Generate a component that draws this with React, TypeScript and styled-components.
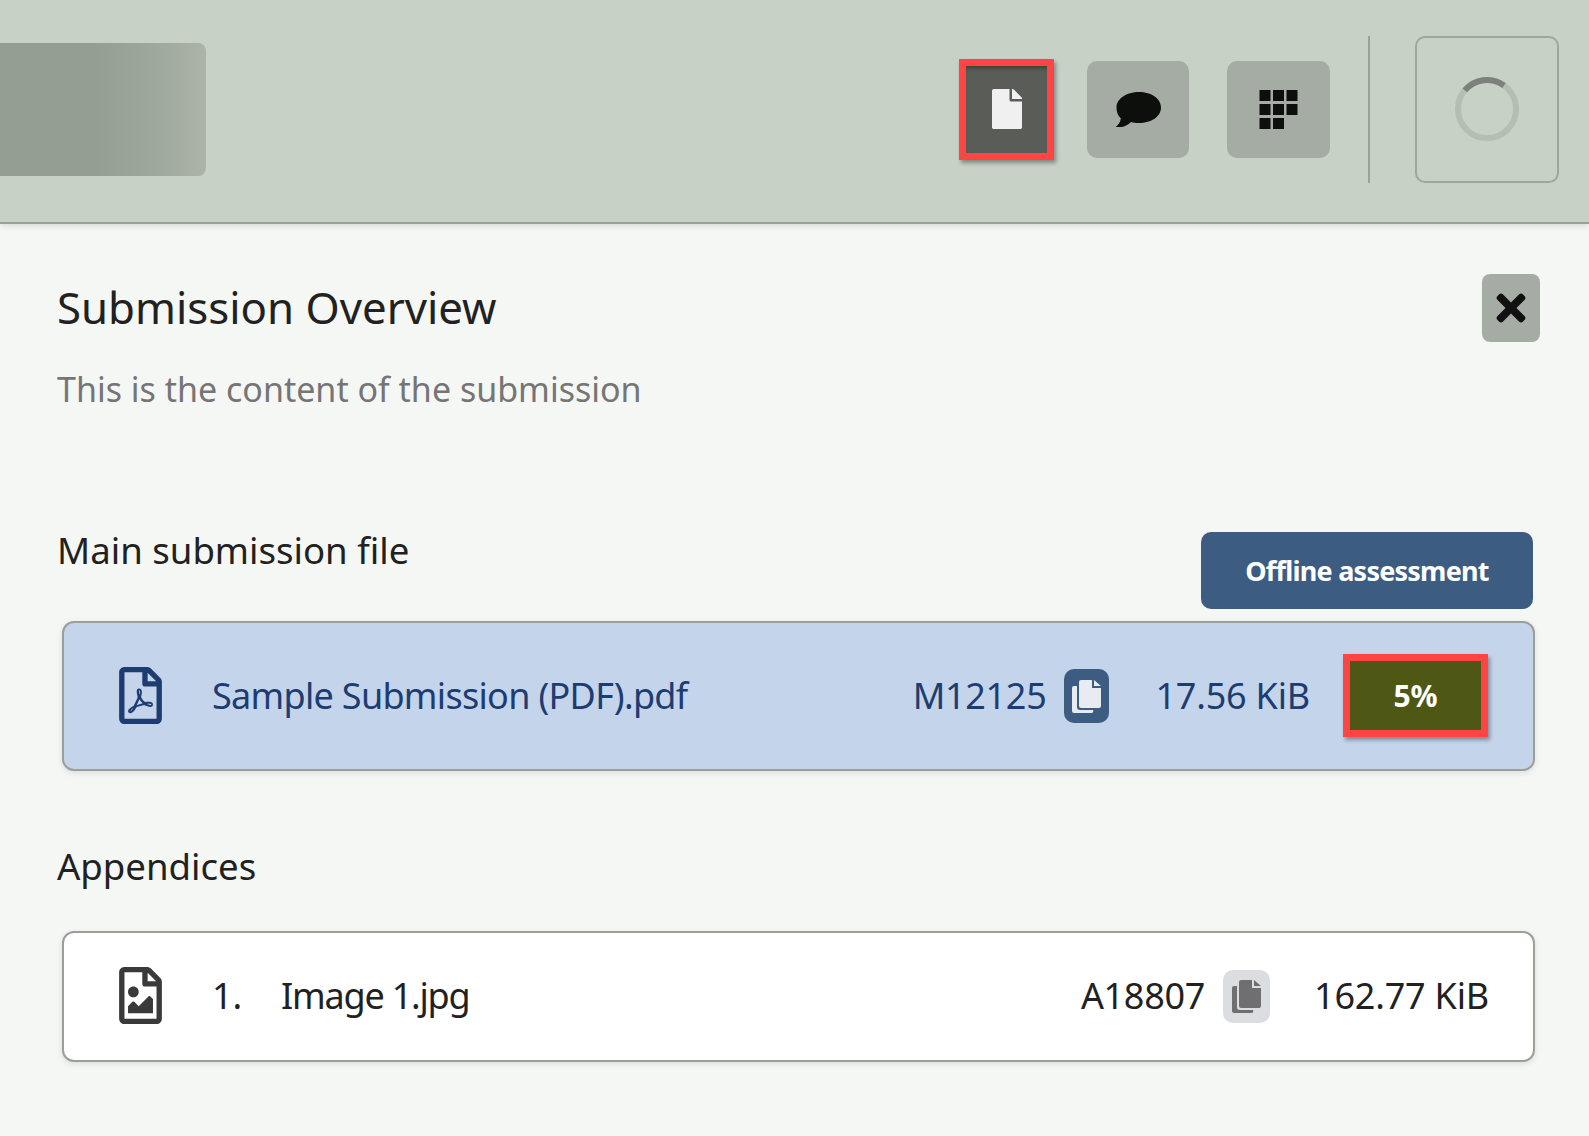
import React from "react";
import styled, { createGlobalStyle } from "styled-components";
import { FaRegFilePdf, FaRegFileImage, FaTimes, FaFile } from "react-icons/fa";

const Global = createGlobalStyle`
  html, body { margin: 0; padding: 0; background: #f5f7f4; }
  body { font-family: "Noto Sans", "Open Sans", sans-serif; color: #212121; }
  * { box-sizing: border-box; }
`;

const Page = styled.div`
  width: 1589px;
  height: 1136px;
  overflow: hidden;
  background: #f5f7f4;
`;

const Header = styled.header`
  height: 224px;
  background: #c7d1c5;
  border-bottom: 2px solid #98a295;
  box-shadow: 0 2px 6px rgba(0, 0, 0, 0.12);
  display: flex;
  align-items: center;
  padding: 0 30px 4px 0;
`;

const BlurredBox = styled.div`
  width: 206px;
  height: 133px;
  margin-right: auto;
  border-radius: 0 8px 8px 0;
  background: linear-gradient(90deg, #949e92 0%, #949e92 45%, #9aa498 65%, #acb3a9 100%);
`;

const IconButton = styled.div<{ $active?: boolean; $wide?: boolean }>`
  width: ${(p) => (p.$active ? "95px" : p.$wide ? "103px" : "102px")};
  height: ${(p) => (p.$active ? "101px" : "97px")};
  margin-right: ${(p) => (p.$active ? "33px" : "38px")};
  display: flex;
  align-items: center;
  justify-content: center;
  background: ${(p) => (p.$active ? "#5a5c58" : "#a5aca4")};
  border-radius: ${(p) => (p.$active ? "0" : "10px")};
  border: ${(p) => (p.$active ? "7px solid #ff4444" : "none")};
  box-shadow: ${(p) =>
    p.$active ? "2px 3px 4px rgba(0,0,0,.35), inset 0 5px 4px -3px rgba(0,0,0,.35)" : "none"};
`;

const Divider = styled.div`
  width: 2px;
  height: 147px;
  margin: 0 45px 0 0;
  background: #98a295;
`;

const SpinnerBox = styled.div`
  width: 144px;
  height: 147px;
  border: 2px solid #9ea79b;
  border-radius: 10px;
  display: flex;
  align-items: center;
  justify-content: center;
`;

const Main = styled.main`
  padding: 49px 49px 0 57px;
`;

const TitleRow = styled.div`
  display: flex;
  align-items: center;
  justify-content: space-between;
  height: 70px;
`;

const Title = styled.h1`
  margin: 0 0 2px;
  font-size: 43.8px;
  line-height: 68px;
  font-weight: 400;
  color: #212121;
`;

const CloseButton = styled.div`
  width: 58px;
  height: 68px;
  background: #a5aca4;
  border-radius: 8px;
  display: flex;
  align-items: center;
  justify-content: center;
  color: #111;
`;

const Subtitle = styled.p`
  margin: 23px 0 0;
  font-size: 34px;
  line-height: 46px;
  color: #757575;
`;

const SectionRow = styled.div`
  display: flex;
  align-items: flex-start;
  justify-content: space-between;
  margin-top: 115px;
  padding-right: 7px;
`;

const SectionTitle = styled.h2<{ $gap: number }>`
  margin: ${(p) => p.$gap}px 0 0;
  font-size: 36.6px;
  line-height: 44px;
  font-weight: 400;
  color: #212121;
`;

const AssessButton = styled.div`
  width: 332px;
  height: 77px;
  margin-top: 5px;
  background: #3d5c82;
  border-radius: 10px;
  color: #fff;
  font-size: 27px;
  letter-spacing: -0.76px;
  font-weight: 700;
  display: flex;
  align-items: center;
  justify-content: center;
`;

const FileCard = styled.div<{ $main?: boolean }>`
  margin: ${(p) => (p.$main ? "12px 5px 0 5px" : "43px 5px 0 5px")};
  height: ${(p) => (p.$main ? "150px" : "131px")};
  display: flex;
  align-items: center;
  padding: 0 ${(p) => (p.$main ? "45px" : "44px")} 0 48px;
  background: ${(p) => (p.$main ? "#c4d4ea" : "#ffffff")};
  color: ${(p) => (p.$main ? "#1d3d72" : "#212121")};
  border: 2px solid #9a9f98;
  border-radius: 12px;
  box-shadow: 0 2px 6px rgba(0, 0, 0, 0.1);
  font-size: 36px;
  & > svg { flex: none; margin-bottom: 2px; }
  & > span { margin-bottom: 2px; }
`;

const FileName = styled.span<{ $indent: number; $spacing: number }>`
  margin-left: ${(p) => p.$indent}px;
  margin-right: auto;
  letter-spacing: ${(p) => p.$spacing}px;
  white-space: nowrap;
`;

const Index = styled.span`
  margin-left: 43px;
  width: 69px;
`;

const Code = styled.span`
  white-space: nowrap;
  letter-spacing: -0.3px;
`;

const CopyButton = styled.div<{ $main?: boolean }>`
  width: ${(p) => (p.$main ? "45px" : "47px")};
  height: ${(p) => (p.$main ? "54px" : "53px")};
  margin: 0 ${(p) => (p.$main ? "46px" : "44px")} 0 18px;
  background: ${(p) => (p.$main ? "#3d5c82" : "#dcdde0")};
  border-radius: 10px;
  display: flex;
  align-items: center;
  justify-content: center;
`;

const Size = styled.span`
  white-space: nowrap;
  letter-spacing: -0.2px;
`;

const Badge = styled.div`
  width: 145px;
  height: 83px;
  margin: 0 0 2px 33px;
  background: #4f5714;
  border: 7px solid #ff4444;
  box-shadow: 2px 3px 4px rgba(0, 0, 0, 0.35);
  color: #fff;
  font-size: 30px;
  font-weight: 700;
  display: flex;
  align-items: center;
  justify-content: center;
`;

const ChatIcon = () => (
  <svg width="46" height="36" viewBox="0 -1 46 36">
    <path
      fill="#0d0f0c"
      d="M24 0C36.500 0 46 6.500 46 15.500S36.500 31 24 31c-3 0-5.600-.4-8-1.100C12.500 33.500 7 36 0 35.500c3-2 5.500-5.300 5.800-9.300C2.500 23.400 1.500 19.500 1.500 15.500 1.500 6.500 11.500 0 24 0z"
    />
  </svg>
);

const GridIcon = () => (
  <svg width="40" height="40" viewBox="-0.5 -1 40 40" fill="#0d0f0c">
    <rect x="0" y="0" width="11" height="11" />
    <rect x="13.500" y="0" width="11" height="11" />
    <rect x="27" y="0" width="11" height="11" />
    <rect x="0" y="14" width="11" height="11" />
    <rect x="13.500" y="14" width="11" height="11" />
    <rect x="27" y="14" width="11" height="11" />
    <rect x="0" y="28" width="11" height="11" />
    <rect x="13.500" y="28" width="11" height="11" />
  </svg>
);

const Spinner = () => (
  <svg width="66" height="66" viewBox="0 0 66 66" fill="none" strokeWidth="6">
    <circle cx="33" cy="33" r="29" stroke="#b4beb2" />
    <path d="M10.800 14.400A29 29 0 0 1 50 9.500" stroke="#7d817c" />
  </svg>
);

const CopyIcon = ({ color }: { color: string }) => (
  <svg width="29" height="33" viewBox="0 0 29 33" fill={color}>
    <path d="M2 6h3v21a3 3 0 0 0 3 3h13a2 2 0 0 1-2 3H2a2 2 0 0 1-2-2V8a2 2 0 0 1 2-2z" />
    <path d="M9 0h11v8h9v18a2 2 0 0 1-2 2H9a2 2 0 0 1-2-2V2a2 2 0 0 1 2-2z" />
    <path d="M22 0l7 6h-7z" />
  </svg>
);

export default function App() {
  return (
    <Page>
      <Global />
      <Header>
        <BlurredBox />
        <IconButton $active>
          <FaFile size={40} color="#f0f0f0" />
        </IconButton>
        <IconButton>
          <ChatIcon />
        </IconButton>
        <IconButton $wide>
          <GridIcon />
        </IconButton>
        <Divider />
        <SpinnerBox>
          <Spinner />
        </SpinnerBox>
      </Header>
      <Main>
        <TitleRow>
          <Title>Submission Overview</Title>
          <CloseButton>
            <FaTimes size={42} />
          </CloseButton>
        </TitleRow>
        <Subtitle>This is the content of the submission</Subtitle>
        <SectionRow>
          <SectionTitle $gap={1}>Main submission file</SectionTitle>
          <AssessButton>Offline assessment</AssessButton>
        </SectionRow>
        <FileCard $main>
          <FaRegFilePdf size={57} />
          <FileName $indent={43} $spacing={-0.7}>Sample Submission (PDF).pdf</FileName>
          <Code>M12125</Code>
          <CopyButton $main>
            <CopyIcon color="#e8ecf2" />
          </CopyButton>
          <Size>17.56 KiB</Size>
          <Badge>5%</Badge>
        </FileCard>
        <SectionTitle $gap={73}>Appendices</SectionTitle>
        <FileCard>
          <FaRegFileImage size={57} color="#3a3a3a" />
          <Index>1.</Index>
          <FileName $indent={0} $spacing={-1.2}>Image 1.jpg</FileName>
          <Code>A18807</Code>
          <CopyButton>
            <CopyIcon color="#6f6f71" />
          </CopyButton>
          <Size>162.77 KiB</Size>
        </FileCard>
      </Main>
    </Page>
  );
}
